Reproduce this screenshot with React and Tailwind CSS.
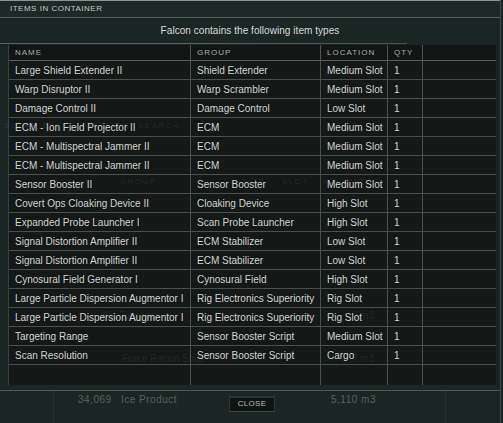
import React from "react";

const rows = [
  ["Large Shield Extender II", "Shield Extender", "Medium Slot", "1"],
  ["Warp Disruptor II", "Warp Scrambler", "Medium Slot", "1"],
  ["Damage Control II", "Damage Control", "Low Slot", "1"],
  ["ECM - Ion Field Projector II", "ECM", "Medium Slot", "1"],
  ["ECM - Multispectral Jammer II", "ECM", "Medium Slot", "1"],
  ["ECM - Multispectral Jammer II", "ECM", "Medium Slot", "1"],
  ["Sensor Booster II", "Sensor Booster", "Medium Slot", "1"],
  ["Covert Ops Cloaking Device II", "Cloaking Device", "High Slot", "1"],
  ["Expanded Probe Launcher I", "Scan Probe Launcher", "High Slot", "1"],
  ["Signal Distortion Amplifier II", "ECM Stabilizer", "Low Slot", "1"],
  ["Signal Distortion Amplifier II", "ECM Stabilizer", "Low Slot", "1"],
  ["Cynosural Field Generator I", "Cynosural Field", "High Slot", "1"],
  ["Large Particle Dispersion Augmentor I", "Rig Electronics Superiority", "Rig Slot", "1"],
  ["Large Particle Dispersion Augmentor I", "Rig Electronics Superiority", "Rig Slot", "1"],
  ["Targeting Range", "Sensor Booster Script", "Medium Slot", "1"],
  ["Scan Resolution", "Sensor Booster Script", "Cargo", "1"],
];

const grid = "grid grid-cols-[181px_130px_67px_35px_1fr]";

// faint content of the window that lies behind this translucent one
const ghosts = [
  { t: "SOLAR SYSTEM", x: 4, y: 120, cap: true },
  { t: "STATION", x: 86, y: 120, cap: true },
  { t: "SEARCH", x: 138, y: 120, cap: true },
  { t: "QTY", x: 52, y: 176, cap: true },
  { t: "GROUP", x: 120, y: 176, cap: true },
  { t: "SIZE", x: 242, y: 176, cap: true },
  { t: "SLOT", x: 282, y: 176, cap: true },
  { t: "VOLUME", x: 322, y: 176, cap: true },
  { t: "40   Tornado", x: 100, y: 308 },
  { t: "0 m3", x: 352, y: 308 },
  { t: "Force Recon Ship", x: 122, y: 351 },
  { t: "0 m3", x: 352, y: 351 },
];

export default function App() {
  return (
    <div
      className="relative w-[503px] h-[423px] overflow-hidden bg-[#1b2624] text-[#d2d4d3]"
      style={{ fontFamily: '"Liberation Sans", Arial, sans-serif' }}
    >
      {/* faint background content behind the translucent window */}
      <div className="absolute left-[78px] top-[392px] text-[10px] text-[#59615f] tracking-[0.5px]">34,069</div>
      <div className="absolute left-[121px] top-[392px] text-[10px] text-[#59615f] tracking-[0.5px]">Ice Product</div>
      <div className="absolute left-[331px] top-[392px] text-[10px] text-[#59615f] tracking-[0.5px]">5,110 m3</div>
      <div className="absolute left-[53px] top-[391px] w-px h-[32px] bg-[#26302e]" />
      <div className="absolute left-[445px] top-[391px] w-px h-[32px] bg-[#26302e]" />

      <div className="relative flex flex-col h-full border-r border-[#3d4846] w-[501px]">
        <div className="h-px bg-[#8d9593]" />
        <div className="h-[17px] flex items-center pl-[10px] bg-[#1d2927] border-b border-[#56615f]">
          <span className="text-[8px] tracking-[0.5px] text-[#c4c8c7] leading-none">ITEMS IN CONTAINER</span>
        </div>
        <div className="h-[25px] flex items-center justify-center text-[10px] text-[#d8dad9] tracking-[0.05px]">
          Falcon contains the following item types
        </div>
        <div className="h-px w-[407px] bg-gradient-to-r from-[#56615f] via-[#56615f] to-[#48524f]" />
        <div className="ml-[8px] mt-px w-[488px] h-[340px] flex flex-col bg-[#141716]/95 border-l border-[#3a4240]">
          <div className={`${grid} h-[16px] border-b border-[#5a605e] bg-[#121514]`}>
            {["NAME", "GROUP", "LOCATION", "QTY", ""].map((h, i) => (
              <div
                key={i}
                className={`flex items-center pl-[6px] text-[8px] tracking-[1px] text-[#a9adac] leading-none ${i > 0 ? "border-l border-[#4f5553]" : ""}`}
              >
                {h}
              </div>
            ))}
          </div>
          {rows.map((r, ri) => (
            <div key={ri} className={`${grid} h-[19px] border-b border-[#4a504e]`}>
              {[...r, ""].map((c, i) => (
                <div
                  key={i}
                  className={`flex items-center pl-[6px] text-[10px] whitespace-nowrap overflow-hidden ${i > 0 ? "border-l border-[#4a504e]" : ""}`}
                >
                  {c}
                </div>
              ))}
            </div>
          ))}
          <div className={`${grid} flex-1`}>
            {[0, 1, 2, 3, 4].map((i) => (
              <div key={i} className={i > 0 ? "border-l border-[#4a504e]" : ""} />
            ))}
          </div>
        </div>
        <div className="h-[5px]" />
        <div className="h-px bg-[#4f5a58]" />
        <div className="flex justify-center pt-[5px] pl-[4px]">
          <div className="w-[46px] h-[16px] flex items-center justify-center bg-[#0f1413] border border-[#2e3735] border-b-[#3f4846] shadow-[inset_0_1px_0_#2a3331]">
            <span className="text-[8px] tracking-[0.3px] text-[#b6bbb9] leading-none">CLOSE</span>
          </div>
        </div>
      </div>

      {/* ghost texts shining through the window */}
      <div className="pointer-events-none absolute inset-0">
        {ghosts.map((g, i) => (
          <div
            key={i}
            className={`absolute whitespace-pre ${g.cap ? "text-[8px] tracking-[1.5px]" : "text-[10px]"} text-[#d2d4d3]/10`}
            style={{ left: g.x, top: g.y }}
          >
            {g.t}
          </div>
        ))}
      </div>
    </div>
  );
}
